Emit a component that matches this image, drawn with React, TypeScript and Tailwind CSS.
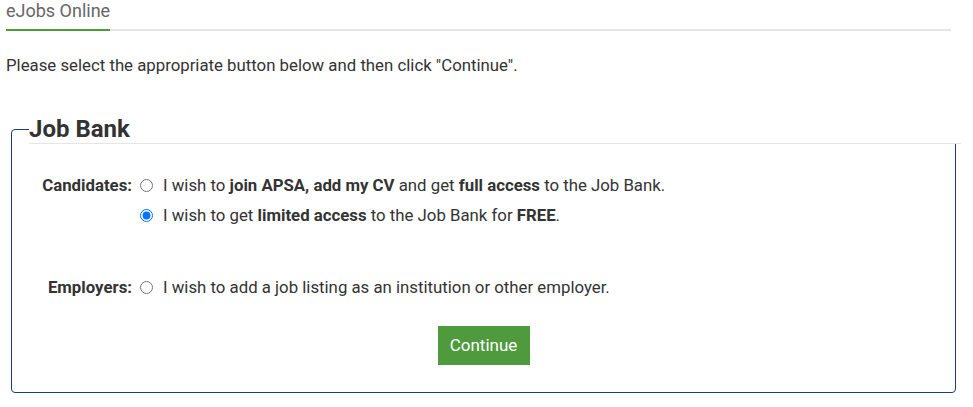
import { useState } from 'react';

type Choice = 'full' | 'limited' | 'employer';

export default function App() {
  const [choice, setChoice] = useState<Choice>('limited');

  return (
    <div className="min-h-screen bg-white text-[#333] font-['Roboto','Liberation_Sans',sans-serif]">
      {/* Tab strip */}
      <div className="ml-[6px] w-[945px] border-b-2 border-[#e5e5e5] flex">
        <div className="-mb-[2px] border-b-2 border-[#4e9a3d] w-[104px] pb-[7px] whitespace-nowrap text-[18px] leading-[22px] text-[#666]">
          eJobs Online
        </div>
      </div>

      <p className="ml-[6px] mt-[23px] text-[16.8px] leading-[22px]">
        Please select the appropriate button below and then click "Continue".
      </p>

      <fieldset className="ml-[11px] mt-[39px] w-[945px] min-w-0 h-[278px] border border-[#1a3c78] rounded-[4px] pl-[17px] pr-0">
        <legend className="w-[932px] border-b border-[#e5e5e5] text-[24px] leading-[28px] font-bold text-[#333]">
          Job Bank
        </legend>

        <div className="mt-[30px] grid grid-cols-[103px_1fr] gap-x-[8px] text-[16.8px] leading-[22px]">
          <div className="text-right font-bold">Candidates:</div>
          <div className="flex flex-col gap-[8px]">
            <label className="flex items-center gap-[10px]">
              <input
                type="radio"
                name="choice"
                className="m-0 w-[13px] h-[13px]"
                checked={choice === 'full'}
                onChange={() => setChoice('full')}
              />
              <span>
                I wish to <b>join APSA, add my CV</b> and get <b>full access</b> to the Job Bank.
              </span>
            </label>
            <label className="flex items-center gap-[10px]">
              <input
                type="radio"
                name="choice"
                className="m-0 w-[13px] h-[13px]"
                checked={choice === 'limited'}
                onChange={() => setChoice('limited')}
              />
              <span>
                I wish to get <b>limited access</b> to the Job Bank for <b>FREE</b>.
              </span>
            </label>
          </div>

          <div className="mt-[50px] text-right font-bold">Employers:</div>
          <div className="mt-[50px]">
            <label className="flex items-center gap-[10px]">
              <input
                type="radio"
                name="choice"
                className="m-0 w-[13px] h-[13px]"
                checked={choice === 'employer'}
                onChange={() => setChoice('employer')}
              />
              <span>I wish to add a job listing as an institution or other employer.</span>
            </label>
          </div>
        </div>

        <div className="mt-[28px] flex justify-center pr-[17px]">
          <button className="w-[92px] h-[39px] bg-[#4e9a3d] text-white text-[17px]">Continue</button>
        </div>
      </fieldset>
    </div>
  );
}
